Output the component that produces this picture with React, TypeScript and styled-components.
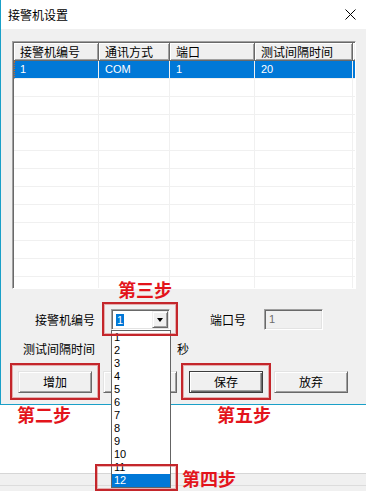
import React from 'react';
import styled, { createGlobalStyle, css } from 'styled-components';

const CJK = `"Noto Sans CJK SC", "Liberation Sans", sans-serif`;
const LATIN = `"Liberation Sans", "Noto Sans CJK SC", sans-serif`;

const GlobalStyle = createGlobalStyle`
  html, body { margin: 0; padding: 0; background: #fff; }
  body { font-family: ${CJK}; font-size: 12px; color: #000; overflow: hidden; }
  #root { width: 366px; height: 491px; }
`;

const Page = styled.div`
  position: relative;
  width: 366px;
  height: 491px;
  overflow: hidden;
  background: #fff;
  display: flex;
  flex-direction: column;
`;

const Dialog = styled.div`
  height: 405px;
  flex: none;
  box-sizing: border-box;
  border-left: 1px solid #1aa0c8;
  border-bottom: 1px solid #1aa0c8;
  display: flex;
  flex-direction: column;
`;

const TitleBar = styled.div`
  height: 29px;
  flex: none;
  background: #fff;
  display: flex;
  align-items: center;
  justify-content: space-between;
  padding: 0 10px 0 7px;
`;

const Title = styled.span`
  font-family: ${CJK};
  font-size: 12px;
  line-height: 14px;
`;

const Body = styled.div`
  flex: 1;
  background: #f0f0f0;
  padding: 12px 10px 0 11px;
  display: flex;
  flex-direction: column;
`;

const ListView = styled.div`
  width: 344px;
  height: 248px;
  flex: none;
  box-sizing: border-box;
  background: #fff;
  border: 1px solid;
  border-color: #a0a0a0 #fff #fff #a0a0a0;
  box-shadow: inset 1px 1px #696969, inset -1px -1px #e3e3e3;
  padding: 1px;
  overflow: hidden;
`;

const Row = styled.div`
  display: grid;
  grid-template-columns: 85px 71px 85px 98px 1px;
  height: 18px;
`;

const HeadCell = styled.div`
  box-sizing: border-box;
  height: 18px;
  background: #f0f0f0;
  border-right: 1px solid #696969;
  border-bottom: 1px solid #696969;
  box-shadow: inset 1px 1px #fff, inset -1px -1px #a0a0a0;
  padding-left: 6px;
  font-family: ${CJK};
  font-size: 12px;
  line-height: 17px;
  white-space: nowrap;
  overflow: hidden;
`;

const Cell = styled.div<{ $selected?: boolean; $focus?: boolean }>`
  box-sizing: border-box;
  height: 18px;
  border-right: 1px solid #f0f0f0;
  border-bottom: 1px solid #f0f0f0;
  padding-left: 6px;
  font-family: ${LATIN};
  font-size: 11px;
  line-height: 17px;
  white-space: nowrap;
  background: ${(p) => (p.$selected ? '#0078d7' : '#fff')};
  color: ${(p) => (p.$selected ? '#fff' : '#000')};
  ${(p) =>
    p.$focus &&
    css`
      border-left: 1px dotted #c86a2a;
      padding-left: 5px;
    `}
`;

const FormRow = styled.div<{ $mt: number }>`
  display: flex;
  align-items: center;
  height: 21px;
  margin-top: ${(p) => p.$mt}px;
`;

const Label = styled.span<{ $w: number; $ml?: number; $right?: boolean }>`
  width: ${(p) => p.$w}px;
  margin-left: ${(p) => p.$ml ?? 0}px;
  text-align: ${(p) => (p.$right ? 'right' : 'left')};
  font-family: ${CJK};
  font-size: 12px;
  line-height: 14px;
  white-space: nowrap;
  flex: none;
`;

const sunken = css`
  box-sizing: border-box;
  border: 1px solid;
  border-color: #a0a0a0 #fff #fff #a0a0a0;
  box-shadow: inset 1px 1px #696969, inset -1px -1px #e3e3e3;
`;

const Combo = styled.div<{ $ml: number }>`
  ${sunken};
  width: 59px;
  height: 21px;
  margin-left: ${(p) => p.$ml}px;
  background: #fff;
  display: flex;
  align-items: center;
  justify-content: space-between;
  padding: 1px 1px 1px 4px;
  flex: none;
`;

const ComboText = styled.span`
  background: #0078d7;
  color: #fff;
  font-family: ${LATIN};
  font-size: 11px;
  line-height: 12px;
  padding: 0 1px;
`;

const DropButton = styled.span`
  width: 16px;
  height: 17px;
  box-sizing: border-box;
  background: #f0f0f0;
  border: 1px solid;
  border-color: #f0f0f0 #696969 #696969 #f0f0f0;
  box-shadow: inset 1px 1px #fff, inset -1px -1px #a0a0a0;
  display: flex;
  align-items: center;
  justify-content: center;
  &::after {
    content: '';
    border-left: 3.5px solid transparent;
    border-right: 3.5px solid transparent;
    border-top: 4px solid #000;
  }
`;

const TextBox = styled.div<{ $ml: number; $disabled?: boolean }>`
  ${sunken};
  width: 59px;
  height: 21px;
  margin-left: ${(p) => p.$ml}px;
  background: ${(p) => (p.$disabled ? '#f0f0f0' : '#fff')};
  color: #6d6d6d;
  padding-left: 4px;
  font-family: ${LATIN};
  font-size: 11px;
  line-height: 19px;
  flex: none;
`;

const ButtonRow = styled.div`
  display: flex;
  margin-top: 12px;
  padding-left: 6px;
`;

const Button = styled.button<{ $ml?: number; $default?: boolean }>`
  width: 74px;
  height: 22px;
  flex: none;
  box-sizing: border-box;
  margin: 0 0 0 ${(p) => p.$ml ?? 0}px;
  padding: 0;
  font-family: ${CJK};
  font-size: 12px;
  line-height: 14px;
  color: #000;
  background: #f0f0f0;
  border: 1px solid;
  border-color: #e3e3e3 #696969 #696969 #e3e3e3;
  box-shadow: inset 1px 1px #fff, inset -1px -1px #a0a0a0;
  ${(p) =>
    p.$default &&
    css`
      border-color: #3c3c3c;
      box-shadow: inset 1px 1px #fff, inset -1px -1px #696969, inset -2px -2px #a0a0a0;
    `}
`;

const Below = styled.div`
  height: 68px;
  flex: none;
  display: flex;
  align-items: flex-start;
  padding-left: 17px;
`;

const Step = styled.span<{ $ml?: number }>`
  margin-left: ${(p) => p.$ml ?? 0}px;
  font-family: ${CJK};
  font-weight: 700;
  font-size: 18px;
  line-height: 18px;
  color: #e3141b;
  white-space: nowrap;
`;

const FloatStep = styled(Step)<{ $x: number; $y: number }>`
  position: absolute;
  left: ${(p) => p.$x}px;
  top: ${(p) => p.$y}px;
  margin: 0;
`;

const Strip = styled.div`
  flex: 1;
  box-sizing: border-box;
  border-top: 1px solid #d6d6d6;
  background: linear-gradient(#f0f0f0 0 11px, #dcdcdc 11px 12px, #f0f0f0 12px);
`;

const DropList = styled.ul`
  position: absolute;
  left: 111px;
  top: 330px;
  width: 60px;
  margin: 0;
  padding: 0;
  list-style: none;
  box-sizing: border-box;
  border: 1px solid #646464;
  background: #fff;
`;

const DropItem = styled.li<{ $selected?: boolean }>`
  height: 13px;
  line-height: 13px;
  padding-left: 2px;
  font-family: ${LATIN};
  font-size: 11px;
  background: ${(p) => (p.$selected ? '#0078d7' : '#fff')};
  color: ${(p) => (p.$selected ? '#fff' : '#000')};
`;

const Callout = styled.div<{ $x: number; $y: number; $w: number; $h: number }>`
  position: absolute;
  left: ${(p) => p.$x}px;
  top: ${(p) => p.$y}px;
  width: ${(p) => p.$w}px;
  height: ${(p) => p.$h}px;
  box-sizing: border-box;
  border: 2px solid #c4262b;
  box-shadow: inset 0 0 0 1px rgba(214, 90, 90, 0.45);
  pointer-events: none;
`;

const CloseIcon = () => (
  <svg width="11" height="11" viewBox="0 0 11 11" aria-hidden>
    <path d="M0.5 0.5 L10.5 10.5 M10.5 0.5 L0.5 10.5" stroke="#000" strokeWidth="1" fill="none" />
  </svg>
);

const headers = ['接警机编号', '通讯方式', '端口', '测试间隔时间'];
const rows: string[][] = [['1', 'COM', '1', '20']];
const EMPTY_ROWS = 12;

export default function App() {
  const allRows = [...rows, ...Array.from({ length: EMPTY_ROWS }, () => ['', '', '', ''])];
  return (
    <>
      <GlobalStyle />
      <Page>
        <Dialog>
          <TitleBar>
            <Title>接警机设置</Title>
            <CloseIcon />
          </TitleBar>
          <Body>
            <ListView>
              <Row>
                {headers.map((h) => (
                  <HeadCell key={h}>{h}</HeadCell>
                ))}
                <HeadCell />
              </Row>
              {allRows.map((r, i) => (
                <Row key={i}>
                  {r.map((c, j) => (
                    <Cell key={j} $selected={i === 0} $focus={i === 0 && j === 0}>
                      {c}
                    </Cell>
                  ))}
                  <Cell $selected={i === 0} />
                </Row>
              ))}
            </ListView>
            <FormRow $mt={20}>
              <Label $w={83} $right>接警机编号</Label>
              <Combo $ml={16}>
                <ComboText>1</ComboText>
                <DropButton />
              </Combo>
              <Label $w={36} $ml={40}>端口号</Label>
              <TextBox $ml={18} $disabled>1</TextBox>
            </FormRow>
            <FormRow $mt={8}>
              <Label $w={83} $right>测试间隔时间</Label>
              <TextBox $ml={16} />
              <Label $w={14} $ml={7}>秒</Label>
            </FormRow>
            <ButtonRow>
              <Button>增加</Button>
              <Button $ml={11} />
              <Button $ml={12} $default>保存</Button>
              <Button $ml={11}>放弃</Button>
            </ButtonRow>
          </Body>
        </Dialog>
        <Below>
          <Step>第二步</Step>
          <Step $ml={146}>第五步</Step>
        </Below>
        <Strip />

        <DropList>
          {Array.from({ length: 12 }, (_, i) => (
            <DropItem key={i} $selected={i === 11}>
              {i + 1}
            </DropItem>
          ))}
        </DropList>

        <FloatStep $x={118} $y={280}>第三步</FloatStep>
        <FloatStep $x={182} $y={469}>第四步</FloatStep>
        <Callout $x={102} $y={302} $w={76} $h={34} />
        <Callout $x={10} $y={363} $w={90} $h={37} />
        <Callout $x={181} $y={363} $w={90} $h={37} />
        <Callout $x={95} $y={464} $w={83} $h={27} />
      </Page>
    </>
  );
}
